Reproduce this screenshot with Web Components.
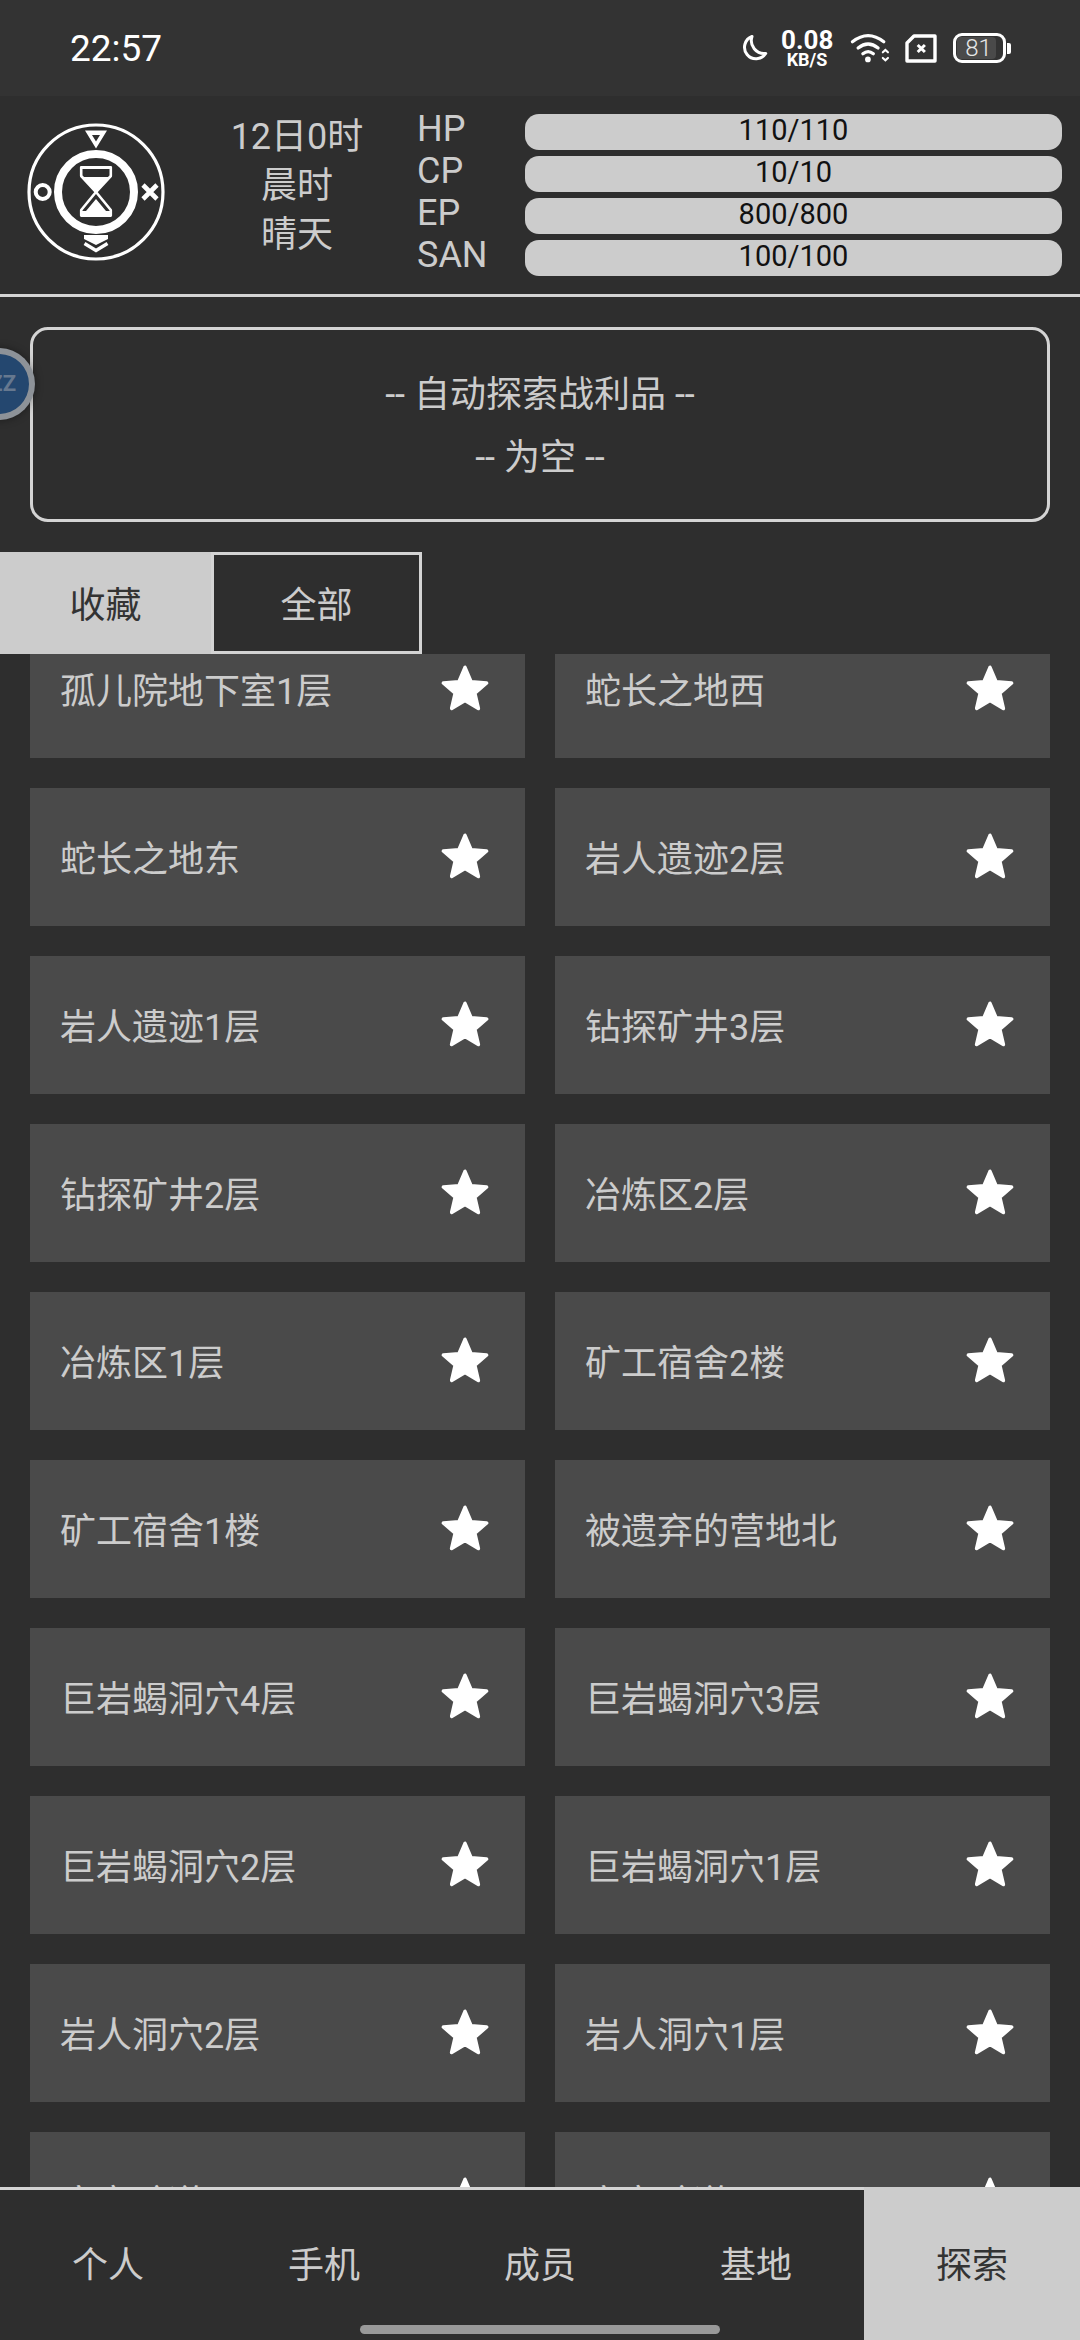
<!DOCTYPE html>
<html lang="zh">
<head>
<meta charset="utf-8">
<title>探索</title>
<style>
  html, body { margin: 0; padding: 0; background: #2e2e2e; }
</style>
</head>
<body>
<app-screen>
  <status-bar time="22:57"></status-bar>
  <stat-header>
    <stat-bar label="HP" value="110/110"></stat-bar>
    <stat-bar label="CP" value="10/10"></stat-bar>
    <stat-bar label="EP" value="800/800"></stat-bar>
    <stat-bar label="SAN" value="100/100"></stat-bar>
  </stat-header>
  <loot-box>
    <div>-- 自动探索战利品 --</div>
    <div>-- 为空 --</div>
  </loot-box>
  <tab-switch></tab-switch>
  <place-list>
    <place-card>孤儿院地下室1层</place-card>
    <place-card>蛇长之地西</place-card>
    <place-card>蛇长之地东</place-card>
    <place-card>岩人遗迹2层</place-card>
    <place-card>岩人遗迹1层</place-card>
    <place-card>钻探矿井3层</place-card>
    <place-card>钻探矿井2层</place-card>
    <place-card>冶炼区2层</place-card>
    <place-card>冶炼区1层</place-card>
    <place-card>矿工宿舍2楼</place-card>
    <place-card>矿工宿舍1楼</place-card>
    <place-card>被遗弃的营地北</place-card>
    <place-card>巨岩蝎洞穴4层</place-card>
    <place-card>巨岩蝎洞穴3层</place-card>
    <place-card>巨岩蝎洞穴2层</place-card>
    <place-card>巨岩蝎洞穴1层</place-card>
    <place-card>岩人洞穴2层</place-card>
    <place-card>岩人洞穴1层</place-card>
    <place-card>废弃矿道口</place-card>
    <place-card>废弃矿道</place-card>
  </place-list>
  <bottom-nav>
    <nav-item>个人</nav-item>
    <nav-item>手机</nav-item>
    <nav-item>成员</nav-item>
    <nav-item>基地</nav-item>
    <nav-item active>探索</nav-item>
  </bottom-nav>
  <float-ball></float-ball>
</app-screen>

<script>
// Page frame, children stack top to bottom
class AppScreen extends HTMLElement {
  connectedCallback() {
    this.attachShadow({ mode: 'open' }).innerHTML = `
      <style>
        :host {
          display: flex;
          flex-direction: column;
          position: relative;
          width: 1080px;
          height: 2340px;
          overflow: hidden;
          background: #2e2e2e;
          color: #ccc;
          font: 36px Roboto, "Noto Sans CJK SC", sans-serif;
        }
      </style>
      <slot></slot>
    `;
  }
}

class StatusBar extends HTMLElement {
  connectedCallback() {
    const time = this.getAttribute('time');
    this.attachShadow({ mode: 'open' }).innerHTML = `
      <style>
        :host {
          display: flex;
          align-items: center;
          height: 96px;
          flex: none;
          background: #333;
          color: #fff;
          padding: 0 69px 0 70px;
          box-sizing: border-box;
        }
        .time { font-size: 37px; margin-right: auto; }
        svg { display: block; flex: none; overflow: visible; }
        .speed { text-align: center; font-weight: 700; margin: 4px 18px 0 14px; width: 52px; }
        .speed div { line-height: 20px; font-size: 26px; white-space: nowrap; }
        .speed div + div { font-size: 18px; }
        .sim { margin: 0 16px 0 16px; }
        .batt { display: flex; align-items: center; }
        .shell {
          box-sizing: border-box;
          width: 53px;
          height: 30px;
          border: 3px solid #fff;
          border-radius: 9px;
          padding: 1px;
        }
        .level {
          width: 39px;
          height: 100%;
          background: #4a4a4a;
          border-radius: 4px;
          font-size: 24px;
          font-weight: 300;
          line-height: 22px;
          text-align: center;
          color: #e6e6e6;
          padding-left: 4px;
          box-sizing: border-box;
        }
        .tip { width: 4px; height: 11px; background: #fff; border-radius: 0 2px 2px 0; margin-left: 1px; }
      </style>
      <div class="time">${time}</div>
      <svg width="26" height="26" viewBox="0 0 26 26" fill="none" stroke="#fff" stroke-width="3" stroke-linejoin="round">
        <path d="M11 1.5A11.5 11.5 0 1 0 24.7 18.5A13 13 0 0 1 11 1.5Z"/>
      </svg>
      <div class="speed"><div>0.08</div><div>KB/S</div></div>
      <svg width="38" height="30" viewBox="0 0 40 30" fill="none" stroke="#fff" stroke-width="3.4" stroke-linecap="round">
        <path d="M1.5 8.5Q18-4.5 34.5 8.5"/>
        <path d="M7.5 15Q18 6.5 28.5 15"/>
        <path d="M12.5 21Q18 16.5 23.5 21"/>
        <circle cx="17.8" cy="27" r="3" fill="#fff" stroke="none"/>
        <path d="M33.5 19.5l2.7-2.5 2.7 2.5M33.5 25.5l2.7 2.5 2.7-2.5" stroke-width="2.2"/>
      </svg>
      <svg class="sim" width="32" height="29" viewBox="0 0 32 29" fill="none" stroke="#fff" stroke-linejoin="round">
        <path d="M9 2H30V27H2V9Z" stroke-width="3.4"/>
        <path d="M12.7 11l7.2 7M19.9 11l-7.2 7" stroke-width="3"/>
      </svg>
      <div class="batt">
        <div class="shell"><div class="level">81</div></div>
        <div class="tip"></div>
      </div>
    `;
  }
}

// Game header: logo, clock, four stat bars in the slot
class StatHeader extends HTMLElement {
  connectedCallback() {
    this.attachShadow({ mode: 'open' }).innerHTML = `
      <style>
        :host {
          display: flex;
          align-items: center;
          height: 201px;
          flex: none;
          box-sizing: border-box;
          border-bottom: 3px solid #d4d4d4;
          padding: 0 18px 0 24px;
        }
        .logo { flex: none; display: block; margin-bottom: 6px; }
        .when {
          flex: none;
          width: 200px;
          margin: 0 18px 18px 29px;
          text-align: center;
          line-height: 49px;
        }
        .stats { flex: 1; display: flex; flex-direction: column; gap: 6px; }
      </style>
      <svg class="logo" width="144" height="144" viewBox="0 0 144 144" fill="none" stroke="#fff">
        <circle cx="72" cy="72" r="67" stroke-width="3.2"/>
        <circle cx="72" cy="72" r="38" stroke-width="8"/>
        <path fill="#fff" fill-rule="evenodd" stroke="none" d="M61 10.5H83L72 28.5ZM68 15L72 21.5 76 15Z"/>
        <circle cx="18.7" cy="72" r="7" stroke-width="4"/>
        <path d="M119 65l14 14M133 65l-14 14" stroke-width="4.6"/>
        <path d="M57.2 47.2H86.8V56L72 72 86.8 90V95.6H57.2V90L72 72 57.2 56Z" stroke-width="2.6" stroke-linejoin="round"/>
        <path fill="#fff" stroke="none" d="M57 46.5H87V49H57ZM58 57H86L72 72ZM72 79L82 91H87V96.5H57V91H62Z"/>
        <path fill="#fff" stroke="none" d="M60 115H84V119L72 125 60 119Z"/>
        <path d="M60.5 123.5L72 130.5 83.5 123.5" stroke-width="3.4"/>
      </svg>
      <div class="when">
        <div>12日0时</div>
        <div>晨时</div>
        <div>晴天</div>
      </div>
      <div class="stats"><slot></slot></div>
    `;
  }
}

class StatBar extends HTMLElement {
  connectedCallback() {
    this.attachShadow({ mode: 'open' }).innerHTML = `
      <style>
        :host { display: flex; height: 36px; align-items: center; }
        .label { flex: none; width: 110px; padding-left: 2px; box-sizing: border-box; line-height: 36px; position: relative; top: -3px; }
        .bar {
          flex: 1;
          height: 36px;
          line-height: 33px;
          border-radius: 14px;
          background: #ccc;
          color: #111;
          text-align: center;
          font-size: 29px;
        }
      </style>
      <div class="label">${this.getAttribute('label')}</div>
      <div class="bar">${this.getAttribute('value')}</div>
    `;
  }
}

class LootBox extends HTMLElement {
  connectedCallback() {
    this.attachShadow({ mode: 'open' }).innerHTML = `
      <style>
        :host {
          display: block;
          flex: none;
          box-sizing: border-box;
          height: 195px;
          margin: 30px 30px 30px 30px;
          padding: 34px 0 0;
          border: 3px solid #d4d4d4;
          border-radius: 18px;
          text-align: center;
          line-height: 63px;
        }
      </style>
      <slot></slot>
    `;
  }
}

class TabSwitch extends HTMLElement {
  connectedCallback() {
    this.attachShadow({ mode: 'open' }).innerHTML = `
      <style>
        :host { display: flex; flex: none; height: 102px; }
        div {
          display: flex;
          align-items: center;
          justify-content: center;
          box-sizing: border-box;
          padding-bottom: 2px;
        }
        .on { width: 211px; background: #ccc; color: #333; }
        .off { width: 211px; border: 3px solid #d4d4d4; }
      </style>
      <div class="on">收藏</div>
      <div class="off">全部</div>
    `;
  }
}

// Scrolled list: the first row sits 34px above the clip edge, last row runs under the nav
class PlaceList extends HTMLElement {
  connectedCallback() {
    this.attachShadow({ mode: 'open' }).innerHTML = `
      <style>
        :host { display: block; flex: 1; min-height: 0; overflow: hidden; }
        .grid {
          display: grid;
          grid-template-columns: 495px 495px;
          grid-auto-rows: 138px;
          gap: 30px;
          padding: 0 30px;
          margin-top: -34px;
        }
      </style>
      <div class="grid"><slot></slot></div>
    `;
  }
}

class PlaceCard extends HTMLElement {
  connectedCallback() {
    this.attachShadow({ mode: 'open' }).innerHTML = `
      <style>
        :host {
          display: flex;
          align-items: center;
          justify-content: space-between;
          background: #4a4a4a;
          padding: 0 34px 0 30px;
        }
        span { display: block; padding-bottom: 2px; }
        svg { display: block; flex: none; }
      </style>
      <span><slot></slot></span>
      <svg width="52" height="52" viewBox="0 0 24 24" fill="#fff" stroke="#fff" stroke-width="1.6" stroke-linejoin="round">
        <path d="M12 17.27L18.18 21l-1.64-7.03L22 9.24l-7.19-.61L12 2 9.19 8.63 2 9.24l5.46 4.73L5.82 21z"/>
      </svg>
    `;
  }
}

class BottomNav extends HTMLElement {
  connectedCallback() {
    this.attachShadow({ mode: 'open' }).innerHTML = `
      <style>
        :host {
          display: flex;
          flex: none;
          height: 153px;
          position: relative;
          background: #2e2e2e;
          border-top: 3px solid #d4d4d4;
          box-sizing: border-box;
        }
        .home {
          position: absolute;
          left: 360px;
          bottom: 6px;
          width: 360px;
          height: 9px;
          border-radius: 5px;
          background: #999;
        }
      </style>
      <slot></slot>
      <div class="home"></div>
    `;
  }
}

class NavItem extends HTMLElement {
  connectedCallback() {
    this.attachShadow({ mode: 'open' }).innerHTML = `
      <style>
        :host {
          flex: 1;
          display: flex;
          align-items: center;
          justify-content: center;
          padding-bottom: 6px;
        }
        :host([active]) {
          background: #ccc;
          color: #333;
          margin-top: -3px;
          padding-top: 3px;
        }
      </style>
      <slot></slot>
    `;
  }
}

// Half hidden floating button on the left edge
class FloatBall extends HTMLElement {
  connectedCallback() {
    this.attachShadow({ mode: 'open' }).innerHTML = `
      <style>
        :host {
          position: absolute;
          left: -37px;
          top: 348px;
          width: 72px;
          height: 72px;
          box-sizing: border-box;
          border: 6px solid rgba(160, 160, 160, .85);
          border-radius: 50%;
          background: #24476f;
          box-shadow: 0 0 8px rgba(0, 0, 0, .4);
          color: #66788f;
          font-size: 22px;
          font-weight: 700;
          line-height: 60px;
          text-align: right;
          padding-right: 13px;
        }
      </style>
      ZZ
    `;
  }
}

customElements.define('app-screen', AppScreen);
customElements.define('status-bar', StatusBar);
customElements.define('stat-header', StatHeader);
customElements.define('stat-bar', StatBar);
customElements.define('loot-box', LootBox);
customElements.define('tab-switch', TabSwitch);
customElements.define('place-list', PlaceList);
customElements.define('place-card', PlaceCard);
customElements.define('bottom-nav', BottomNav);
customElements.define('nav-item', NavItem);
customElements.define('float-ball', FloatBall);
</script>
</body>
</html>
